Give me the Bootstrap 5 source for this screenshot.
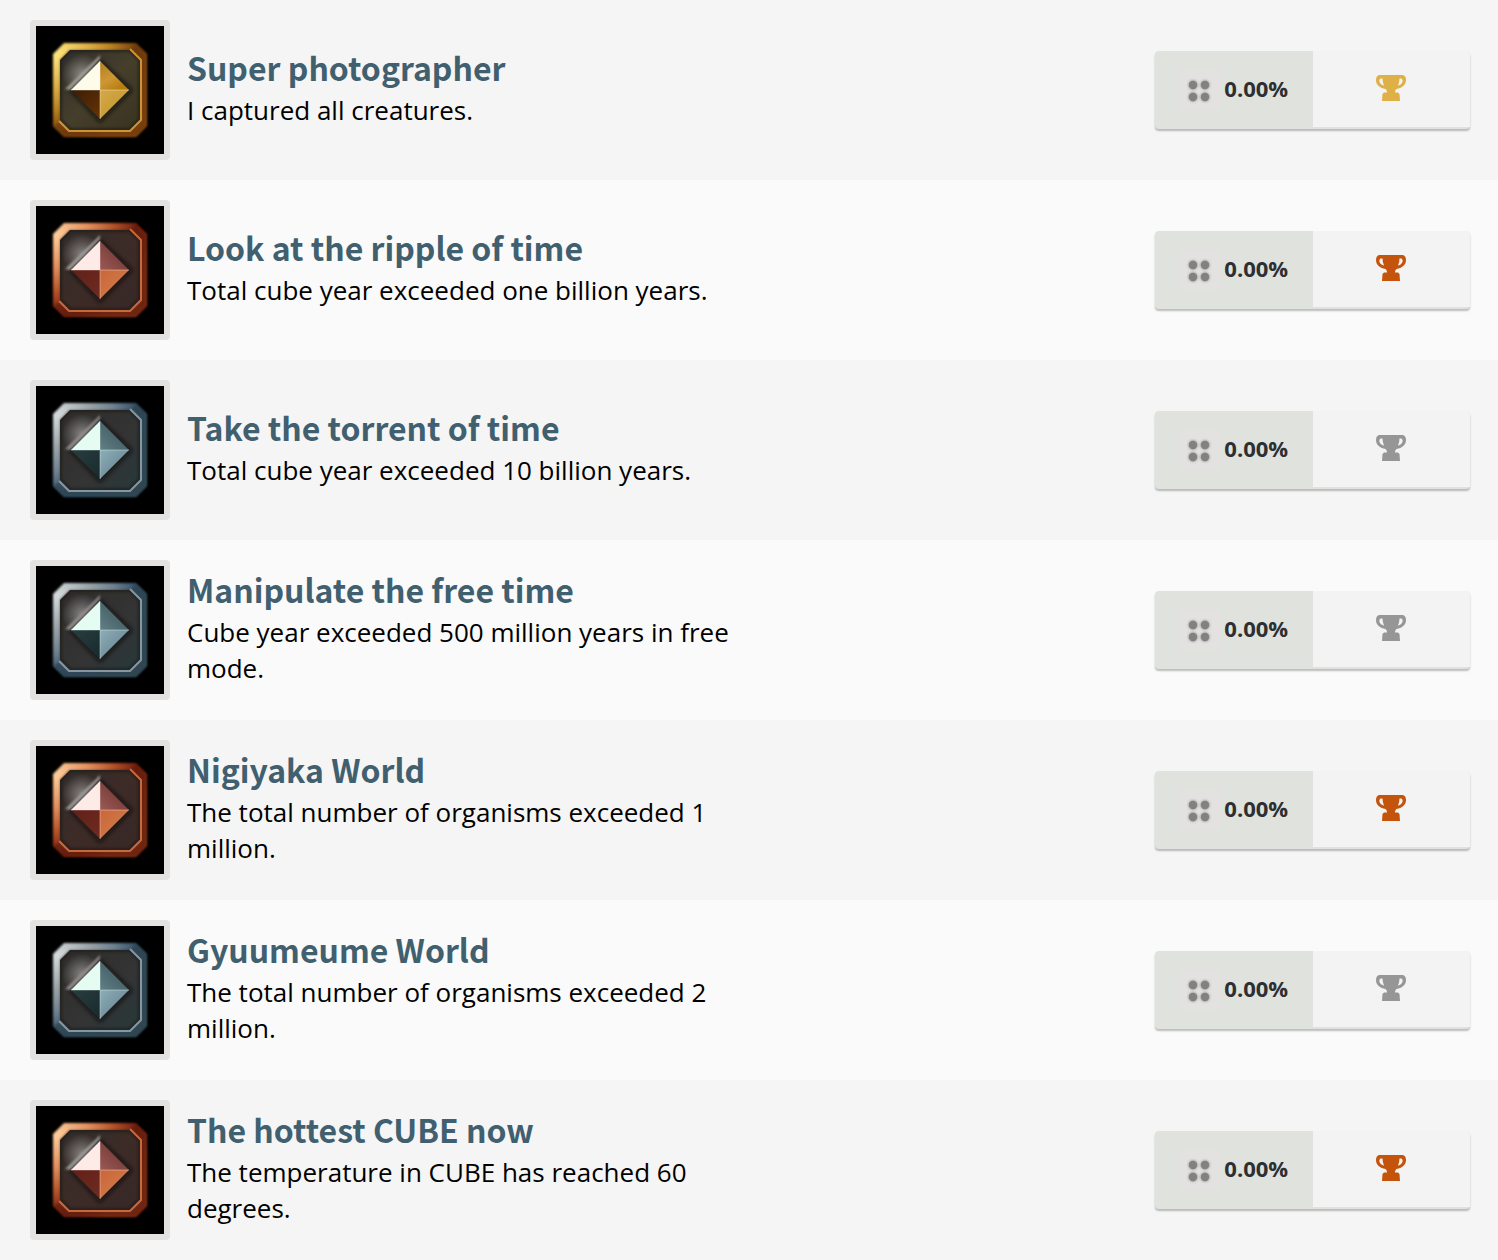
<!DOCTYPE html>
<html lang="en">
<head>
<meta charset="utf-8">
<meta name="viewport" content="width=device-width, initial-scale=1">
<title>Trophies</title>
<link href="https://cdn.jsdelivr.net/npm/bootstrap@5.3.0/dist/css/bootstrap.min.css" rel="stylesheet">
<style>
  body { background: #f5f5f5; color: #000; font-family: "Open Sans", "Noto Sans", sans-serif; font-size: 26px; line-height: 36px; }
  .trophy-row { padding: 20px 28px 20px 30px; background: #f5f5f5; gap: 17px; }
  .trophy-row:nth-child(even) { background: #fafafa; }
  .trophy-art { border: 6px solid #e3e2e0; border-radius: 4px; background: #000; }
  .trophy-art svg { width: 128px; height: 128px; }
  .trophy-copy { max-width: 580px; padding-bottom: 2px; }
  .trophy-name { margin-bottom: 8px; font-family: "Noto Sans CJK JP", "Open Sans", sans-serif; font-weight: 700; font-size: 32px; line-height: 34px; }
  .trophy-name a { color: #41606f; }
  .trophy-stats { width: 315px; height: 78px; border-radius: 4px; background: #e0e2dd; box-shadow: 0 2px 2px rgba(0, 0, 0, .25); }
  .rarity { gap: 5px; font-size: 22px; font-weight: 700; color: #2d2f31; }
  .rarity svg { width: 40px; height: 40px; }
  .rarity span { padding-bottom: 4px; }
  .grade { background: #f3f3f3; margin-bottom: 2px; border-top-right-radius: 4px; padding-bottom: 3px; }
  .grade svg { width: 32px; height: 28px; }
  .gold { --cup: #deb046; --frame: url(#goldFrame); --shade: #6c3608; --line: #d59d3c; --back: url(#goldBack); --shine: #fffbea; --ne: url(#goldNe); --sw: url(#goldSw); --se: url(#goldSe); --edge: #aaa7a2; }
  .bronze { --cup: #c4540b; --frame: url(#bronzeFrame); --shade: #5d1b0a; --line: #cf7142; --back: url(#bronzeBack); --shine: #feeae7; --ne: url(#bronzeNe); --sw: url(#bronzeSw); --se: url(#bronzeSe); --edge: #a5a5a2; }
  .silver { --cup: #969696; --frame: url(#silverFrame); --shade: #2c3f49; --line: #8fa0ab; --back: url(#silverBack); --shine: #e4fcf2; --ne: url(#silverNe); --sw: url(#silverSw); --se: url(#silverSe); --edge: #9c9594; }
</style>
<script src="https://cdn.jsdelivr.net/npm/bootstrap@5.3.0/dist/js/bootstrap.bundle.min.js"></script>
</head>
<body>
<main>
  <article class="trophy-row gold d-flex align-items-center">
    <div class="trophy-art d-flex flex-shrink-0"><svg aria-hidden="true"><use href="#gem"/></svg></div>
    <div class="trophy-copy"><h2 class="trophy-name"><a class="text-decoration-none" href="#">Super photographer</a></h2><p class="mb-0">I captured all creatures.</p></div>
    <div class="trophy-stats d-flex flex-shrink-0 ms-auto"><div class="rarity w-50 d-flex align-items-center justify-content-center"><svg aria-hidden="true"><use href="#dots"/></svg><span>0.00%</span></div><div class="grade w-50 d-flex align-items-center justify-content-center"><svg role="img" aria-label="Gold"><use href="#cup"/></svg></div></div>
  </article>
  <article class="trophy-row bronze d-flex align-items-center">
    <div class="trophy-art d-flex flex-shrink-0"><svg aria-hidden="true"><use href="#gem"/></svg></div>
    <div class="trophy-copy"><h2 class="trophy-name"><a class="text-decoration-none" href="#">Look at the ripple of time</a></h2><p class="mb-0">Total cube year exceeded one billion years.</p></div>
    <div class="trophy-stats d-flex flex-shrink-0 ms-auto"><div class="rarity w-50 d-flex align-items-center justify-content-center"><svg aria-hidden="true"><use href="#dots"/></svg><span>0.00%</span></div><div class="grade w-50 d-flex align-items-center justify-content-center"><svg role="img" aria-label="Bronze"><use href="#cup"/></svg></div></div>
  </article>
  <article class="trophy-row silver d-flex align-items-center">
    <div class="trophy-art d-flex flex-shrink-0"><svg aria-hidden="true"><use href="#gem"/></svg></div>
    <div class="trophy-copy"><h2 class="trophy-name"><a class="text-decoration-none" href="#">Take the torrent of time</a></h2><p class="mb-0">Total cube year exceeded 10 billion years.</p></div>
    <div class="trophy-stats d-flex flex-shrink-0 ms-auto"><div class="rarity w-50 d-flex align-items-center justify-content-center"><svg aria-hidden="true"><use href="#dots"/></svg><span>0.00%</span></div><div class="grade w-50 d-flex align-items-center justify-content-center"><svg role="img" aria-label="Silver"><use href="#cup"/></svg></div></div>
  </article>
  <article class="trophy-row silver d-flex align-items-center">
    <div class="trophy-art d-flex flex-shrink-0"><svg aria-hidden="true"><use href="#gem"/></svg></div>
    <div class="trophy-copy"><h2 class="trophy-name"><a class="text-decoration-none" href="#">Manipulate the free time</a></h2><p class="mb-0">Cube year exceeded 500 million years in free mode.</p></div>
    <div class="trophy-stats d-flex flex-shrink-0 ms-auto"><div class="rarity w-50 d-flex align-items-center justify-content-center"><svg aria-hidden="true"><use href="#dots"/></svg><span>0.00%</span></div><div class="grade w-50 d-flex align-items-center justify-content-center"><svg role="img" aria-label="Silver"><use href="#cup"/></svg></div></div>
  </article>
  <article class="trophy-row bronze d-flex align-items-center">
    <div class="trophy-art d-flex flex-shrink-0"><svg aria-hidden="true"><use href="#gem"/></svg></div>
    <div class="trophy-copy"><h2 class="trophy-name"><a class="text-decoration-none" href="#">Nigiyaka World</a></h2><p class="mb-0">The total number of organisms exceeded 1 million.</p></div>
    <div class="trophy-stats d-flex flex-shrink-0 ms-auto"><div class="rarity w-50 d-flex align-items-center justify-content-center"><svg aria-hidden="true"><use href="#dots"/></svg><span>0.00%</span></div><div class="grade w-50 d-flex align-items-center justify-content-center"><svg role="img" aria-label="Bronze"><use href="#cup"/></svg></div></div>
  </article>
  <article class="trophy-row silver d-flex align-items-center">
    <div class="trophy-art d-flex flex-shrink-0"><svg aria-hidden="true"><use href="#gem"/></svg></div>
    <div class="trophy-copy"><h2 class="trophy-name"><a class="text-decoration-none" href="#">Gyuumeume World</a></h2><p class="mb-0">The total number of organisms exceeded 2 million.</p></div>
    <div class="trophy-stats d-flex flex-shrink-0 ms-auto"><div class="rarity w-50 d-flex align-items-center justify-content-center"><svg aria-hidden="true"><use href="#dots"/></svg><span>0.00%</span></div><div class="grade w-50 d-flex align-items-center justify-content-center"><svg role="img" aria-label="Silver"><use href="#cup"/></svg></div></div>
  </article>
  <article class="trophy-row bronze d-flex align-items-center">
    <div class="trophy-art d-flex flex-shrink-0"><svg aria-hidden="true"><use href="#gem"/></svg></div>
    <div class="trophy-copy"><h2 class="trophy-name"><a class="text-decoration-none" href="#">The hottest CUBE now</a></h2><p class="mb-0">The temperature in CUBE has reached 60 degrees.</p></div>
    <div class="trophy-stats d-flex flex-shrink-0 ms-auto"><div class="rarity w-50 d-flex align-items-center justify-content-center"><svg aria-hidden="true"><use href="#dots"/></svg><span>0.00%</span></div><div class="grade w-50 d-flex align-items-center justify-content-center"><svg role="img" aria-label="Bronze"><use href="#cup"/></svg></div></div>
  </article>
</main>

<!-- Shared artwork; the metal class on each row picks the paints -->
<svg class="position-absolute top-0" width="0" height="0" aria-hidden="true">
  <defs>
    <filter id="soft" x="-10%" y="-10%" width="120%" height="120%"><feGaussianBlur stdDeviation="0.8"/></filter>
    <filter id="halo" x="-30%" y="-30%" width="160%" height="160%"><feGaussianBlur stdDeviation="2"/></filter>
    <radialGradient id="goldFrame" gradientUnits="userSpaceOnUse" cx="20" cy="28" r="95"><stop offset="0" stop-color="#ffe57f"/><stop offset=".35" stop-color="#dcae45"/><stop offset=".6" stop-color="#b57c20"/><stop offset=".85" stop-color="#74400b"/><stop offset="1" stop-color="#8a5010"/></radialGradient>
    <radialGradient id="bronzeFrame" gradientUnits="userSpaceOnUse" cx="20" cy="28" r="95"><stop offset="0" stop-color="#ffcf9c"/><stop offset=".35" stop-color="#e28d5c"/><stop offset=".6" stop-color="#b6542a"/><stop offset=".85" stop-color="#741e10"/><stop offset="1" stop-color="#8c3415"/></radialGradient>
    <radialGradient id="silverFrame" gradientUnits="userSpaceOnUse" cx="20" cy="28" r="95"><stop offset="0" stop-color="#d6dcdd"/><stop offset=".35" stop-color="#9ba5a9"/><stop offset=".6" stop-color="#708391"/><stop offset=".85" stop-color="#355069"/><stop offset="1" stop-color="#3a5260"/></radialGradient>
    <linearGradient id="goldBack" x1="0" y1="0" x2="1" y2="1"><stop offset="0" stop-color="#2f2d2c"/><stop offset=".5" stop-color="#453e2b"/><stop offset="1" stop-color="#38331f"/></linearGradient>
    <linearGradient id="bronzeBack" x1="0" y1="0" x2="1" y2="1"><stop offset="0" stop-color="#2f2d2c"/><stop offset=".5" stop-color="#3d2b26"/><stop offset="1" stop-color="#372826"/></linearGradient>
    <linearGradient id="silverBack" x1="0" y1="0" x2="1" y2="1"><stop offset="0" stop-color="#2f2c2b"/><stop offset=".6" stop-color="#343434"/><stop offset="1" stop-color="#26383a"/></linearGradient>
    <linearGradient id="goldNe" x1="0" y1="0" x2=".6" y2="1"><stop offset="0" stop-color="#b07c1e"/><stop offset=".6" stop-color="#ce9736"/><stop offset="1" stop-color="#b87d0c"/></linearGradient>
    <linearGradient id="bronzeNe" x1="0" y1="1" x2="1" y2="0"><stop offset="0" stop-color="#9b5a54"/><stop offset="1" stop-color="#642c2a"/></linearGradient>
    <linearGradient id="silverNe" x1="0" y1="1" x2="1" y2="0"><stop offset="0" stop-color="#628087"/><stop offset="1" stop-color="#344b52"/></linearGradient>
    <linearGradient id="goldSw" x1="0" y1="0" x2="1" y2="1"><stop offset="0" stop-color="#3a1c07"/><stop offset="1" stop-color="#673405"/></linearGradient>
    <linearGradient id="bronzeSw" x1="0" y1="0" x2="1" y2="1"><stop offset="0" stop-color="#602019"/><stop offset="1" stop-color="#702b21"/></linearGradient>
    <linearGradient id="silverSw" x1="0" y1="0" x2="1" y2="1"><stop offset="0" stop-color="#293d40"/><stop offset="1" stop-color="#182a2c"/></linearGradient>
    <linearGradient id="goldSe" x1="0" y1="0" x2=".6" y2=".6"><stop offset="0" stop-color="#d3a94c"/><stop offset="1" stop-color="#c99b32"/></linearGradient>
    <linearGradient id="bronzeSe" x1="0" y1="0" x2=".6" y2=".6"><stop offset="0" stop-color="#c8663c"/><stop offset="1" stop-color="#d17643"/></linearGradient>
    <linearGradient id="silverSe" x1="0" y1="0" x2=".6" y2=".6"><stop offset="0" stop-color="#8caeb9"/><stop offset="1" stop-color="#738e9c"/></linearGradient>
    <radialGradient id="glow" cx=".5" cy=".5" r=".5"><stop offset="0" stop-color="#fff" stop-opacity=".4"/><stop offset="1" stop-color="#fff" stop-opacity="0"/></radialGradient>
  </defs>
  <symbol id="gem" viewBox="0 0 128 128">
    <path d="M28 17H100L111 28V100L100 111H28L17 100V28Z" style="fill:var(--frame)" filter="url(#soft)"/>
    <path d="M99 18L110 28V100L100 110H28L18 100L24 95L33 105H95L105 95V33L95 24Z" style="fill:var(--shade)" opacity=".65" filter="url(#soft)"/>
    <path d="M34 24H94L104 34V94L94 104H34L24 94V34Z" style="fill:var(--back)"/>
    <path d="M34 25H94L103 34V94L94 103H34L25 94V34Z" fill="none" stroke="#16130f" stroke-width="2" opacity=".6" filter="url(#soft)"/>
    <path d="M94 23L105 34V94L94 105H33L23 95" fill="none" style="stroke:var(--line)" stroke-width="2" opacity=".9"/>
    <circle cx="46" cy="48" r="20" fill="url(#glow)"/>
    <path d="M64 33L97 64L64 97L33 64Z" fill="#080808" opacity=".7" filter="url(#halo)"/>
    <path d="M29 63L64 29V33L34 64Z" style="fill:var(--edge)" opacity=".85" filter="url(#soft)"/>
    <path d="M64 35V64H35Z" style="fill:var(--shine)"/>
    <path d="M64 35L93 64H64Z" style="fill:var(--ne)"/>
    <path d="M35 64H64V93Z" style="fill:var(--sw)"/>
    <path d="M64 64H93L64 93Z" style="fill:var(--se)"/>
    <path d="M64 35V93M35 64H93" style="stroke:var(--shine)" stroke-width="1" opacity=".4"/>
  </symbol>
  <symbol id="dots" viewBox="0 0 40 40">
    <rect width="40" height="40" fill="#e3e2e0"/>
    <g fill="#a9aaa7" filter="url(#soft)"><circle cx="14" cy="15" r="5"/><circle cx="26" cy="15" r="5"/><circle cx="14" cy="27" r="5"/><circle cx="26" cy="27" r="5"/></g>
    <g fill="#818181"><circle cx="14" cy="15" r="4.2"/><circle cx="26" cy="15" r="4.2"/><circle cx="14" cy="27" r="4.2"/><circle cx="26" cy="27" r="4.2"/></g>
  </symbol>
  <symbol id="cup" viewBox="0 0 32 28">
    <path style="fill:var(--cup)" fill-rule="evenodd" d="M4 1H28Q31 2 31 6C31 11 27 14 21.500 15C20.500 16 20 17 20 18.500H23L24.500 20L25 27H7L7.500 20L9 18.500H12C12 17 11.500 16 10.500 15C5 14 1 11 1 6Q1 2 4 1ZM6 4.500C3.500 5 4 9 6.500 10.500Q8 11.500 9 11.500Q7.500 8 7.500 4.500ZM26 4.500H24.500Q24.500 8 23 11.500Q24 11.500 25.500 10.500C28 9 28.500 5 26 4.500Z"/>
  </symbol>
</svg>
</body>
</html>
